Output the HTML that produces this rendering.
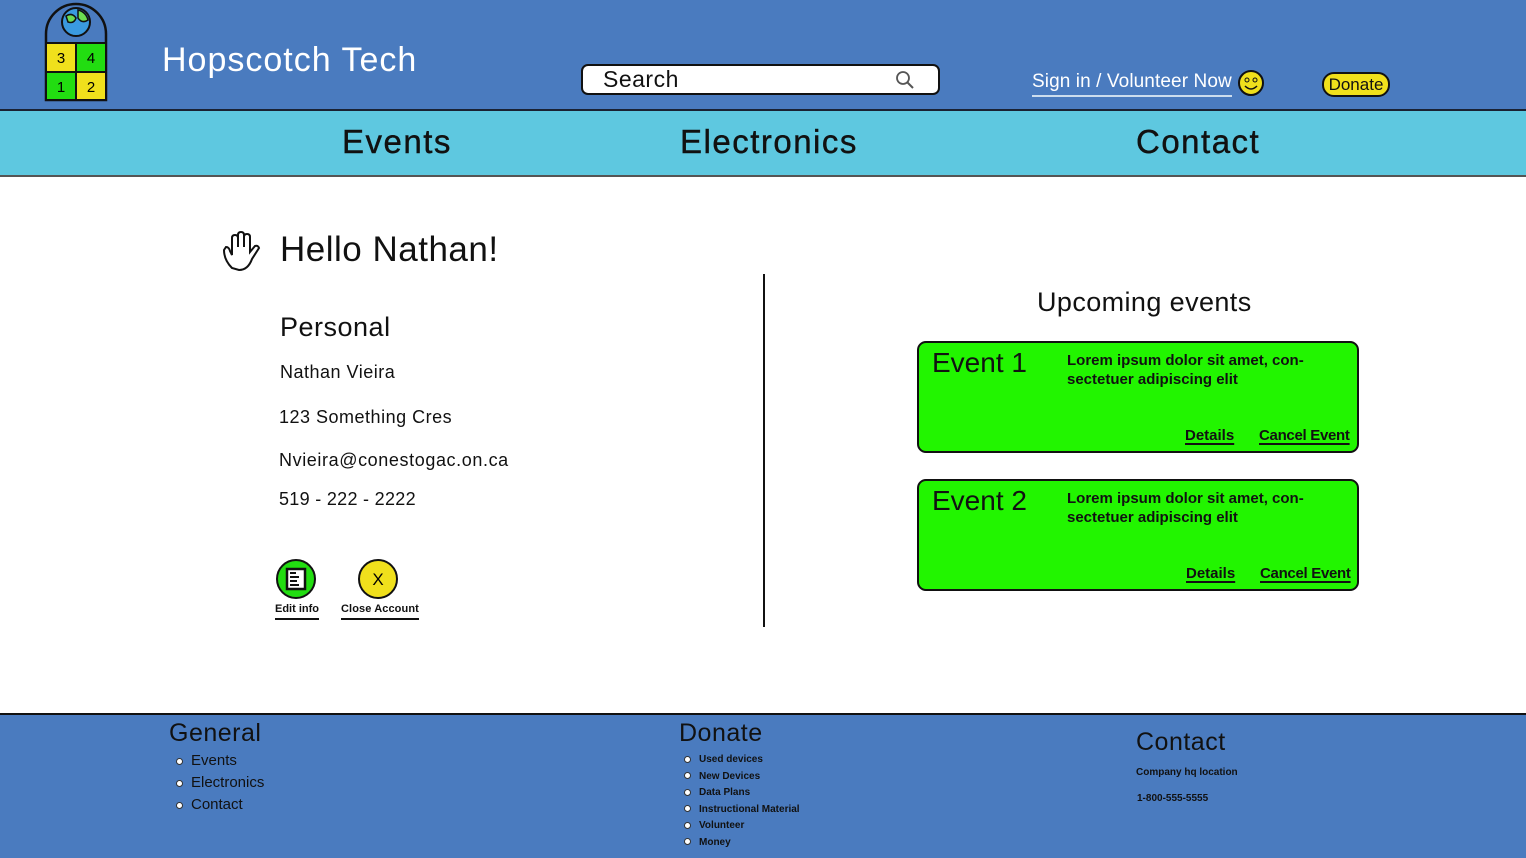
<!DOCTYPE html>
<html><head><meta charset="utf-8"><style>
*{margin:0;padding:0;box-sizing:border-box}
body{width:1526px;height:858px;position:relative;background:#fff;font-family:"Liberation Sans",sans-serif;overflow:hidden;color:#111}
.a{position:absolute;white-space:nowrap}
#hdr{position:absolute;left:0;top:0;width:1526px;height:111px;background:#4a7bbf;border-bottom:2px solid #1a2233}
#nav{position:absolute;left:0;top:111px;width:1526px;height:66px;background:#5ec8e0;border-bottom:2px solid #555}
#ftr{position:absolute;left:0;top:713px;width:1526px;height:145px;background:#4a7bbf;border-top:2px solid #111}
.card{position:absolute;left:917px;width:442px;height:112px;background:#22f500;border:2px solid #111;border-radius:9px}
.u{text-decoration:underline;text-decoration-thickness:2px;text-underline-offset:3px}
.dot{display:inline-block;width:7px;height:7px;border-radius:50%;background:#fff;border:1px solid #333;margin-right:8px;vertical-align:middle}
.nv{font-size:33px;letter-spacing:1.5px;-webkit-text-stroke:0.4px #111}
</style></head><body>
<div id="hdr"></div>
<svg class="a" style="left:44px;top:2px" width="64" height="100" viewBox="0 0 64 100">
<path d="M2 98V32A30 30 0 0 1 62 32V98Z" fill="#4a7bbf" stroke="#111" stroke-width="2.5"/>
<circle cx="32" cy="20" r="14" fill="#3a9ae0" stroke="#111" stroke-width="2"/>
<path d="M22 14q6-4 10 2q-2 6-8 4zM34 8q8 2 10 10q-6 4-10-2z" fill="#6cdc50" stroke="#111" stroke-width="1.5"/>
<rect x="2" y="41" width="30" height="29" fill="#f0e01c" stroke="#111" stroke-width="2"/>
<rect x="32" y="41" width="30" height="29" fill="#22dd11" stroke="#111" stroke-width="2"/>
<rect x="2" y="70" width="30" height="28" fill="#22dd11" stroke="#111" stroke-width="2"/>
<rect x="32" y="70" width="30" height="28" fill="#f0e01c" stroke="#111" stroke-width="2"/>
<text x="17" y="61" font-size="15" text-anchor="middle" font-family="Liberation Sans">3</text>
<text x="47" y="61" font-size="15" text-anchor="middle" font-family="Liberation Sans">4</text>
<text x="17" y="90" font-size="15" text-anchor="middle" font-family="Liberation Sans">1</text>
<text x="47" y="90" font-size="15" text-anchor="middle" font-family="Liberation Sans">2</text>
</svg>
<div class="a" style="left:162px;top:41px;font-size:34px;color:#fff;letter-spacing:1px">Hopscotch Tech</div>
<div class="a" style="left:581px;top:64px;width:359px;height:31px;background:#fff;border:2px solid #111;border-radius:7px"></div>
<div class="a" style="left:603px;top:66px;font-size:23px;letter-spacing:0.5px">Search</div>
<svg class="a" style="left:895px;top:70px" width="20" height="20"><circle cx="8" cy="8" r="6" fill="none" stroke="#555" stroke-width="1.8"/><path d="M12.5 12.5L18 18" stroke="#555" stroke-width="2"/></svg>
<div class="a" style="left:1032px;top:71px;font-size:19px;color:#fff;border-bottom:2px solid #cde;padding-bottom:2px;letter-spacing:0.1px">Sign in / Volunteer Now</div>
<svg class="a" style="left:1237px;top:69px" width="28" height="28"><circle cx="14" cy="14" r="12" fill="#f0e01c" stroke="#111" stroke-width="2"/><circle cx="10" cy="11" r="2" fill="none" stroke="#111"/><circle cx="18" cy="11" r="2" fill="none" stroke="#111"/><path d="M8 17q6 6 12 0" fill="none" stroke="#111" stroke-width="1.5"/></svg>
<div class="a" style="left:1322px;top:72px;width:68px;height:25px;background:#f0e01c;border:2px solid #111;border-radius:12px;font-size:17px;text-align:center;line-height:21px">Donate</div>
<div id="nav"></div>
<div class="a nv" style="left:342px;top:123px">Events</div>
<div class="a nv" style="left:680px;top:123px">Electronics</div>
<div class="a nv" style="left:1136px;top:123px">Contact</div>
<svg class="a" style="left:220px;top:228px" width="44" height="44" viewBox="0 0 44 44"><path d="M12 40q-8-8-8-18l2-3q3 0 4 4l2 4V10q0-3 3-3t3 3v9V7q0-3 3-3t3 3v12V9q0-3 3-3t3 3v15l5-6q3-1 4 2l-7 11q-4 11-13 11z" fill="#fff" stroke="#111" stroke-width="2"/></svg>
<div class="a" style="left:280px;top:230px;font-size:35px;letter-spacing:0.5px">Hello Nathan!</div>
<div class="a" style="left:280px;top:312px;font-size:27px;letter-spacing:0.5px">Personal</div>
<div class="a" style="left:280px;top:362px;font-size:18px;letter-spacing:0.5px">Nathan Vieira</div>
<div class="a" style="left:279px;top:407px;font-size:18px;letter-spacing:0.5px">123 Something Cres</div>
<div class="a" style="left:279px;top:450px;font-size:18px;letter-spacing:0.6px">Nvieira@conestogac.on.ca</div>
<div class="a" style="left:279px;top:489px;font-size:18px;letter-spacing:0.3px">519 - 222 - 2222</div>
<svg class="a" style="left:276px;top:559px" width="42" height="42"><circle cx="20" cy="20" r="19" fill="#22dd11" stroke="#111" stroke-width="2"/><rect x="11" y="10" width="18" height="20" fill="#fff" stroke="#111" stroke-width="2.5"/><path d="M14 14h6M14 18h9M14 22h7M14 26h9" stroke="#111" stroke-width="2"/></svg>
<svg class="a" style="left:358px;top:559px" width="42" height="42"><circle cx="20" cy="20" r="19" fill="#f0e01c" stroke="#111" stroke-width="2"/><text x="20" y="26" font-size="17" text-anchor="middle" font-family="Liberation Sans">X</text></svg>
<div class="a" style="left:275px;top:603px;font-size:11px;font-weight:bold;border-bottom:2px solid #111;padding-bottom:3px">Edit info</div>
<div class="a" style="left:341px;top:603px;font-size:11px;font-weight:bold;border-bottom:2px solid #111;padding-bottom:3px;letter-spacing:0.1px">Close Account</div>
<div class="a" style="left:763px;top:274px;width:2px;height:353px;background:#111"></div>
<div class="a" style="left:1037px;top:287px;font-size:27px;letter-spacing:0.4px">Upcoming events</div>
<div class="card" style="top:341px"></div>
<div class="a" style="left:932px;top:347px;font-size:28px">Event 1</div>
<div class="a" style="left:1067px;top:351px;font-size:15px;font-weight:bold;line-height:19px">Lorem ipsum dolor sit amet, con-<br>sectetuer adipiscing elit</div>
<div class="a u" style="left:1185px;top:427px;font-size:15px;font-weight:bold">Details</div>
<div class="a u" style="left:1259px;top:427px;font-size:15px;font-weight:bold;letter-spacing:-0.3px">Cancel Event</div>
<div class="card" style="top:479px"></div>
<div class="a" style="left:932px;top:485px;font-size:28px">Event 2</div>
<div class="a" style="left:1067px;top:489px;font-size:15px;font-weight:bold;line-height:19px">Lorem ipsum dolor sit amet, con-<br>sectetuer adipiscing elit</div>
<div class="a u" style="left:1186px;top:565px;font-size:15px;font-weight:bold">Details</div>
<div class="a u" style="left:1260px;top:565px;font-size:15px;font-weight:bold;letter-spacing:-0.3px">Cancel Event</div>
<div id="ftr"></div>
<div class="a" style="left:169px;top:719px;font-size:25px;letter-spacing:0.5px">General</div>
<div class="a" style="left:176px;top:750px;font-size:15px;line-height:22px"><span class="dot"></span>Events<br><span class="dot"></span>Electronics<br><span class="dot"></span>Contact</div>
<div class="a" style="left:679px;top:719px;font-size:25px;letter-spacing:0.5px">Donate</div>
<div class="a" style="left:684px;top:752px;font-size:10px;font-weight:bold;line-height:16.5px"><span class="dot"></span>Used devices<br><span class="dot"></span>New Devices<br><span class="dot"></span>Data Plans<br><span class="dot"></span>Instructional Material<br><span class="dot"></span>Volunteer<br><span class="dot"></span>Money</div>
<div class="a" style="left:1136px;top:728px;font-size:25px;letter-spacing:0.5px">Contact</div>
<div class="a" style="left:1136px;top:767px;font-size:10px;font-weight:bold">Company hq location</div>
<div class="a" style="left:1137px;top:793px;font-size:10px;font-weight:bold">1-800-555-5555</div>
</body></html>
